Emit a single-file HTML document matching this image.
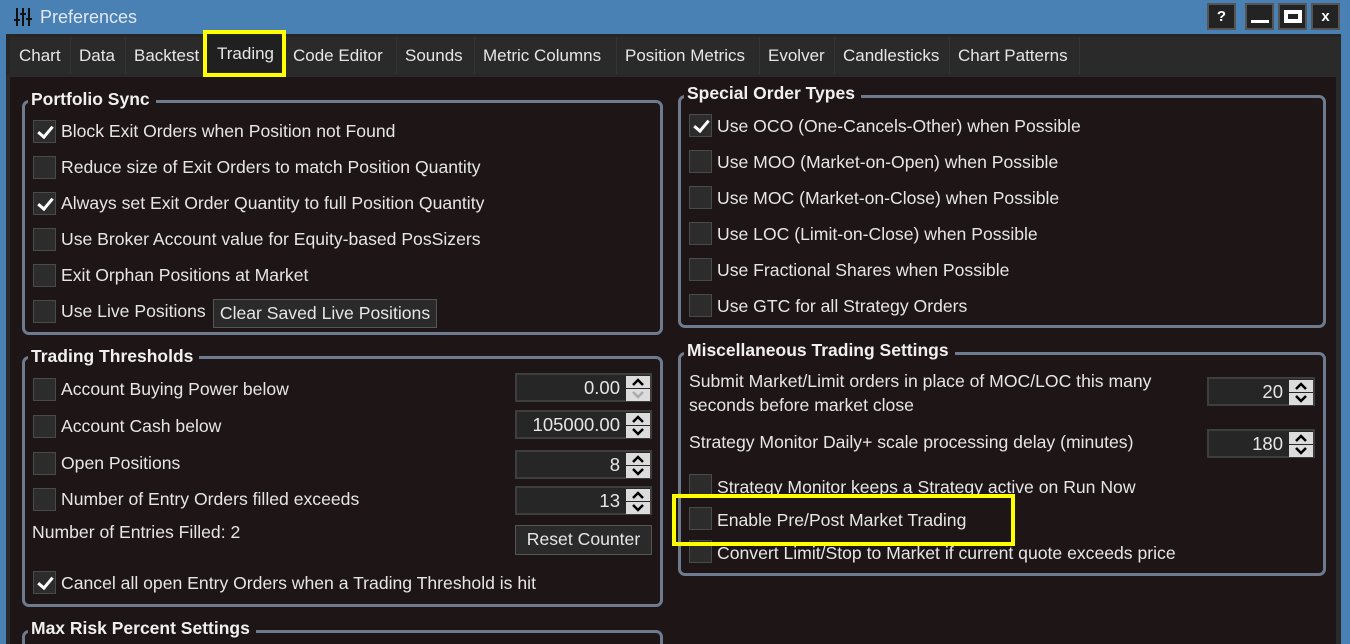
<!DOCTYPE html>
<html><head><meta charset="utf-8"><style>
*{box-sizing:border-box;margin:0;padding:0}
html{width:1350px;height:644px;overflow:hidden}
body{width:1350px;height:644px;overflow:hidden;background:#4a81b4;font-family:"Liberation Sans",sans-serif;color:#e6e6e6;font-size:17px;position:relative}
.a{position:absolute;white-space:nowrap}
.t{font-size:17.6px;letter-spacing:0;line-height:20px}
.tab{position:absolute;top:37px;height:37px;line-height:37px;font-size:17px;letter-spacing:0;color:#e6e6e6;border-right:1px solid #333;padding:0}
.grp{position:absolute;border:3px solid #6e7b8e;border-radius:7px}
.gt{position:absolute;background:#1e1516;font-weight:bold;font-size:17.5px;padding:0 6px 0 3px;line-height:20px;letter-spacing:0;color:#f0f0f0}
.cb{position:absolute;width:23px;height:23px;background:#2c2c2c;border:1px solid #4a4a4a}
.cb.on::after{content:"";position:absolute;left:7px;top:2px;width:6px;height:12px;border:solid #fff;border-width:0 3px 3px 0;transform:rotate(40deg)}
.spin{position:absolute;height:29px;background:#262626;border:2px solid #3e3e3e}
.spin .v{position:absolute;right:30px;top:2px;font-size:18.5px;line-height:22px}
.spin .b{position:absolute;right:0;width:24px;height:12px;background:#dcdcdc}
.spin .b svg{display:block;margin:2px auto 0}
.btn{position:absolute;background:#2a2a2a;border:1px solid #555;text-align:center;font-size:17.6px;line-height:26px}
.tb{position:absolute;top:3px;width:29px;height:27px;background:#232323;border:2px solid #555;color:#fff;text-align:center;font-weight:bold;line-height:23px;font-size:15px}
.yl{position:absolute;border:4px solid #ffff00}
</style></head><body>
<div class="a" style="left:14px;top:8px;width:18px;height:18px">
<svg width="18" height="18"><g stroke="#111" stroke-width="2"><line x1="3" y1="0" x2="3" y2="18"/><line x1="9" y1="0" x2="9" y2="18"/><line x1="15" y1="0" x2="15" y2="18"/></g><g fill="#111"><rect x="0" y="11" width="6" height="2"/><rect x="6" y="5" width="6" height="2"/><rect x="12" y="10" width="6" height="2"/></g></svg></div>
<div class="a" style="left:40px;top:7px;font-size:18px;color:#dfe8f2">Preferences</div>
<div class="tb" style="left:1207px">?</div>
<div class="tb" style="left:1245px"><div style="margin:15px auto 0;width:18px;height:3px;background:#fff"></div></div>
<div class="tb" style="left:1278px"><div style="margin:5px auto 0;width:18px;height:13px;border:4px solid #fff"></div></div>
<div class="tb" style="left:1311px">x</div>
<div class="a" style="left:6px;top:34px;width:1335px;height:42px;background:#262626"></div>
<div class="a" style="left:10px;top:37px;width:1331px;height:37px;background:#2a2a2a"></div>
<div class="tab" style="left:10px;width:61px;padding-left:9px">Chart</div>
<div class="tab" style="left:71px;width:55px;padding-left:8px">Data</div>
<div class="tab" style="left:126px;width:81px;padding-left:8px">Backtest</div>
<div class="tab" style="left:207px;width:78px;padding-left:10px;top:35px;background:#202020">Trading</div>
<div class="tab" style="left:285px;width:112px;padding-left:8px">Code Editor</div>
<div class="tab" style="left:397px;width:78px;padding-left:8px">Sounds</div>
<div class="tab" style="left:475px;width:142px;padding-left:8px">Metric Columns</div>
<div class="tab" style="left:617px;width:143px;padding-left:8px">Position Metrics</div>
<div class="tab" style="left:760px;width:75px;padding-left:8px">Evolver</div>
<div class="tab" style="left:835px;width:115px;padding-left:8px">Candlesticks</div>
<div class="tab" style="left:950px;width:130px;padding-left:8px">Chart Patterns</div>
<div class="a" style="left:6px;top:74px;width:1335px;height:570px;background:#2a2a2a"></div>
<div class="a" style="left:10px;top:77px;width:1326px;height:567px;background:#1e1516"></div>

<div class="grp" style="left:22px;top:100px;width:641px;height:235px"></div>
<div class="gt" style="left:28px;top:89px">Portfolio Sync</div>
<div class="cb on" style="left:33px;top:120px"></div><div class="a t" style="left:61px;top:121px">Block Exit Orders when Position not Found</div>
<div class="cb" style="left:33px;top:156px"></div><div class="a t" style="left:61px;top:157px">Reduce size of Exit Orders to match Position Quantity</div>
<div class="cb on" style="left:33px;top:192px"></div><div class="a t" style="left:61px;top:193px">Always set Exit Order Quantity to full Position Quantity</div>
<div class="cb" style="left:33px;top:228px"></div><div class="a t" style="left:61px;top:229px">Use Broker Account value for Equity-based PosSizers</div>
<div class="cb" style="left:33px;top:264px"></div><div class="a t" style="left:61px;top:265px">Exit Orphan Positions at Market</div>
<div class="cb" style="left:33px;top:300px"></div><div class="a t" style="left:61px;top:301px">Use Live Positions</div>
<div class="btn" style="left:213px;top:299px;width:224px;height:29px">Clear Saved Live Positions</div>

<div class="grp" style="left:22px;top:356px;width:641px;height:251px"></div>
<div class="gt" style="left:28px;top:346px">Trading Thresholds</div>
<div class="cb" style="left:33px;top:378px"></div><div class="a t" style="left:61px;top:379px">Account Buying Power below</div>
<div class="cb" style="left:33px;top:415px"></div><div class="a t" style="left:61px;top:416px">Account Cash below</div>
<div class="cb" style="left:33px;top:452px"></div><div class="a t" style="left:61px;top:453px">Open Positions</div>
<div class="cb" style="left:33px;top:488px"></div><div class="a t" style="left:61px;top:489px">Number of Entry Orders filled exceeds</div>
<div class="a t" style="left:32px;top:522px">Number of Entries Filled: 2</div>
<div class="btn" style="left:515px;top:525px;width:137px;height:30px">Reset Counter</div>
<div class="cb on" style="left:33px;top:571px"></div><div class="a t" style="left:61px;top:573px">Cancel all open Entry Orders when a Trading Threshold is hit</div>

<div class="spin" style="left:515px;top:373px;width:137px"><div class="v">0.00</div><div class="b" style="top:1px"><svg width="14" height="8"><path d="M2 7L7 2L12 7" stroke="#000" stroke-width="2.5" fill="none"/></svg></div><div class="b" style="top:14px"><svg width="14" height="8"><path d="M2 1L7 6L12 1" stroke="#aaa" stroke-width="2.5" fill="none"/></svg></div></div>
<div class="spin" style="left:515px;top:410px;width:137px"><div class="v">105000.00</div><div class="b" style="top:1px"><svg width="14" height="8"><path d="M2 7L7 2L12 7" stroke="#000" stroke-width="2.5" fill="none"/></svg></div><div class="b" style="top:14px"><svg width="14" height="8"><path d="M2 1L7 6L12 1" stroke="#000" stroke-width="2.5" fill="none"/></svg></div></div>
<div class="spin" style="left:515px;top:450px;width:137px"><div class="v">8</div><div class="b" style="top:1px"><svg width="14" height="8"><path d="M2 7L7 2L12 7" stroke="#000" stroke-width="2.5" fill="none"/></svg></div><div class="b" style="top:14px"><svg width="14" height="8"><path d="M2 1L7 6L12 1" stroke="#000" stroke-width="2.5" fill="none"/></svg></div></div>
<div class="spin" style="left:515px;top:486px;width:137px"><div class="v">13</div><div class="b" style="top:1px"><svg width="14" height="8"><path d="M2 7L7 2L12 7" stroke="#000" stroke-width="2.5" fill="none"/></svg></div><div class="b" style="top:14px"><svg width="14" height="8"><path d="M2 1L7 6L12 1" stroke="#000" stroke-width="2.5" fill="none"/></svg></div></div>

<div class="grp" style="left:22px;top:630px;width:641px;height:14px;border-bottom:none;border-radius:7px 7px 0 0"></div>
<div class="gt" style="left:28px;top:618px">Max Risk Percent Settings</div>

<div class="grp" style="left:678px;top:95px;width:648px;height:233px"></div>
<div class="gt" style="left:684px;top:83px">Special Order Types</div>
<div class="cb on" style="left:689px;top:114px"></div><div class="a t" style="left:717px;top:116px">Use OCO (One-Cancels-Other) when Possible</div>
<div class="cb" style="left:689px;top:150px"></div><div class="a t" style="left:717px;top:152px">Use MOO (Market-on-Open) when Possible</div>
<div class="cb" style="left:689px;top:186px"></div><div class="a t" style="left:717px;top:188px">Use MOC (Market-on-Close) when Possible</div>
<div class="cb" style="left:689px;top:222px"></div><div class="a t" style="left:717px;top:224px">Use LOC (Limit-on-Close) when Possible</div>
<div class="cb" style="left:689px;top:258px"></div><div class="a t" style="left:717px;top:260px">Use Fractional Shares when Possible</div>
<div class="cb" style="left:689px;top:294px"></div><div class="a t" style="left:717px;top:296px">Use GTC for all Strategy Orders</div>

<div class="grp" style="left:678px;top:352px;width:648px;height:224px"></div>
<div class="gt" style="left:684px;top:340px">Miscellaneous Trading Settings</div>
<div class="a t" style="left:689px;top:371px">Submit Market/Limit orders in place of MOC/LOC this many</div>
<div class="a t" style="left:689px;top:395px">seconds before market close</div>
<div class="a t" style="left:689px;top:432px">Strategy Monitor Daily+ scale processing delay (minutes)</div>
<div class="spin" style="left:1207px;top:377px;width:108px"><div class="v">20</div><div class="b" style="top:1px"><svg width="14" height="8"><path d="M2 7L7 2L12 7" stroke="#000" stroke-width="2.5" fill="none"/></svg></div><div class="b" style="top:14px"><svg width="14" height="8"><path d="M2 1L7 6L12 1" stroke="#000" stroke-width="2.5" fill="none"/></svg></div></div>
<div class="spin" style="left:1207px;top:429px;width:108px"><div class="v">180</div><div class="b" style="top:1px"><svg width="14" height="8"><path d="M2 7L7 2L12 7" stroke="#000" stroke-width="2.5" fill="none"/></svg></div><div class="b" style="top:14px"><svg width="14" height="8"><path d="M2 1L7 6L12 1" stroke="#000" stroke-width="2.5" fill="none"/></svg></div></div>
<div class="cb" style="left:689px;top:474px"></div><div class="a t" style="left:717px;top:477px">Strategy Monitor keeps a Strategy active on Run Now</div>
<div class="cb" style="left:689px;top:507px"></div><div class="a t" style="left:717px;top:510px">Enable Pre/Post Market Trading</div>
<div class="cb" style="left:689px;top:540px"></div><div class="a t" style="left:717px;top:543px">Convert Limit/Stop to Market if current quote exceeds price</div>

<div class="yl" style="left:203px;top:30px;width:83px;height:47px"></div>
<div class="yl" style="left:672px;top:494px;width:343px;height:52px"></div>
</body></html>
